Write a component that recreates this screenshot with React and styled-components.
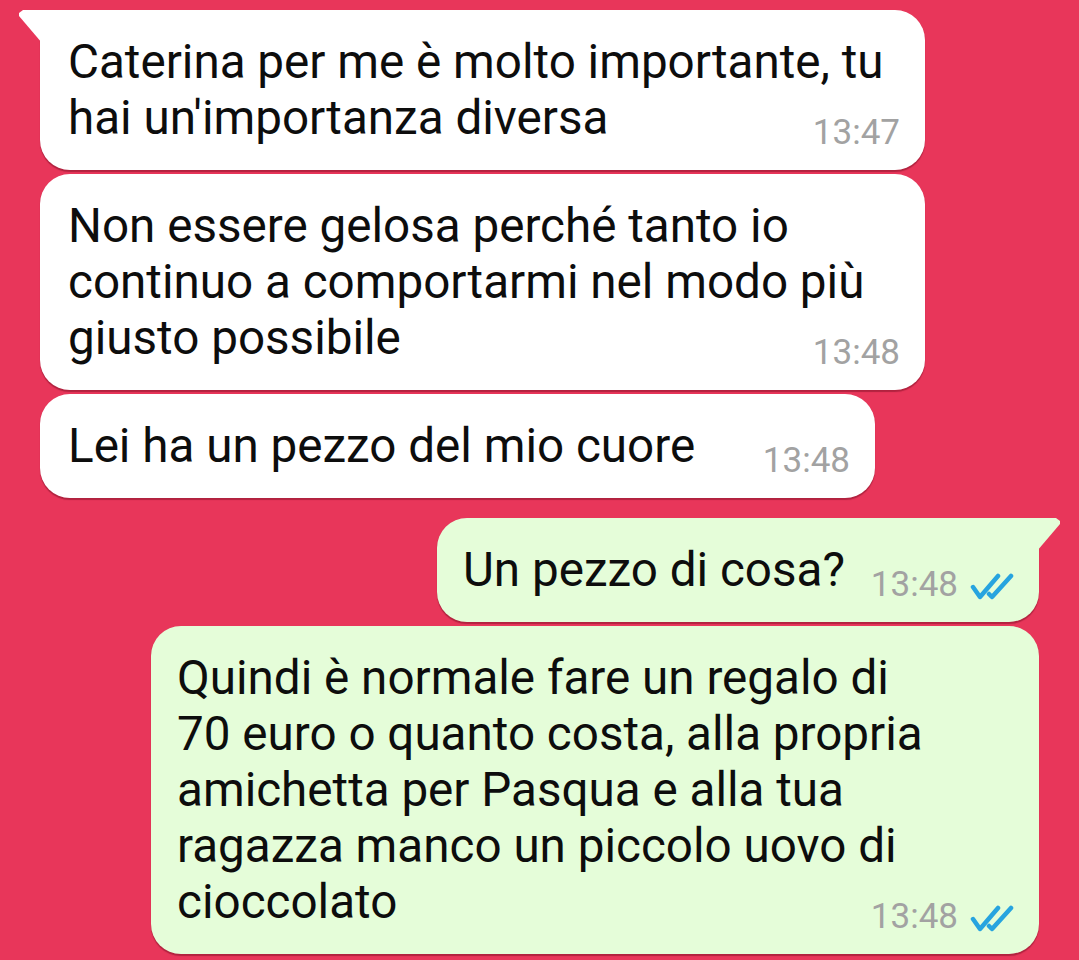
import React from 'react'
import styled, {createGlobalStyle} from 'styled-components'

const GlobalStyle = createGlobalStyle`
  html, body {
    margin: 0;
    padding: 0;
    background: #e8365a;
  }
  body {
    font-family: Roboto, 'Noto Sans', 'Liberation Sans', sans-serif;
  }
`

const Screen = styled.div`
  width: 1079px;
  height: 960px;
  overflow: hidden;
  background: #e8365a;
  display: flex;
  flex-direction: column;
  padding-top: 10px;
  box-sizing: border-box;
`

const Bubble = styled.div`
  position: relative;
  box-sizing: border-box;
  flex-shrink: 0;
  width: ${p => p.$w}px;
  margin-top: ${p => p.$gap ?? 4}px;
  align-self: ${p => (p.$out ? 'flex-end' : 'flex-start')};
  margin-left: ${p => (p.$out ? 0 : 40)}px;
  margin-right: ${p => (p.$out ? 40 : 0)}px;
  padding: 24px 25px 17px ${p => (p.$out ? 26 : 28)}px;
  display: flex;
  flex-direction: column;
  background: ${p => (p.$out ? '#e5fdd9' : '#ffffff')};
  border-radius: 30px;
  ${p => p.$tail && !p.$out && 'border-top-left-radius: 0;'}
  ${p => p.$tail && p.$out && 'border-top-right-radius: 0;'}
  box-shadow: 0 1.5px 1px rgba(110, 10, 30, 0.45);

  &::before {
    content: '';
    display: ${p => (p.$tail ? 'block' : 'none')};
    position: absolute;
    top: 0;
    width: 23px;
    height: 33px;
    background: inherit;
    ${p =>
      p.$out
        ? 'right: -21px; clip-path: polygon(0 0, calc(100% - 4px) 0, 100% 3px, 100% 6px, 0 100%);'
        : 'left: -21px; clip-path: polygon(4px 0, 100% 0, 100% 100%, 0 6px, 0 3px);'}
  }
`

const Text = styled.div`
  font-size: 47.6px;
  line-height: 56px;
  color: #0d0d0d;
  white-space: nowrap;
  margin-bottom: 7px;
`

const Meta = styled.div`
  align-self: flex-end;
  margin-top: -40px;
  display: flex;
  align-items: center;
  gap: 12px;
  height: 40px;
  font-size: 35px;
  line-height: 40px;
  color: #a2a2a2;
`

const Ticks = () => (
  <svg width="44" height="28" viewBox="0 0 44 28" fill="none" style={{marginTop: 4}}>
    <path
      d="M3 14 L10 24 L28 3"
      stroke="#27a4df"
      strokeWidth="4.5"
      strokeLinecap="round"
      strokeLinejoin="round"
    />
    <path
      d="M19 21 L22 24 L41 3"
      stroke="#27a4df"
      strokeWidth="4.5"
      strokeLinecap="round"
      strokeLinejoin="round"
    />
  </svg>
)

const messages = [
  {
    lines: ['Caterina per me è molto importante, tu', "hai un'importanza diversa"],
    time: '13:47',
    w: 885,
    tail: true,
    gap: 0,
  },
  {
    lines: [
      'Non essere gelosa perché tanto io',
      'continuo a comportarmi nel modo più',
      'giusto possibile',
    ],
    time: '13:48',
    w: 885,
  },
  {lines: ['Lei ha un pezzo del mio cuore'], time: '13:48', w: 835},
  {lines: ['Un pezzo di cosa?'], time: '13:48', w: 602, out: true, tail: true, gap: 20},
  {
    lines: [
      'Quindi è normale fare un regalo di',
      '70 euro o quanto costa, alla propria',
      'amichetta per Pasqua e alla tua',
      'ragazza manco un piccolo uovo di',
      'cioccolato',
    ],
    time: '13:48',
    w: 888,
    out: true,
  },
]

export default function App() {
  return (
    <Screen>
      <GlobalStyle />
      {messages.map((m, i) => (
        <Bubble key={i} $w={m.w} $out={m.out} $tail={m.tail} $gap={m.gap}>
          <Text>
            {m.lines.map((l, j) => (
              <div key={j}>{l}</div>
            ))}
          </Text>
          <Meta>
            <span>{m.time}</span>
            {m.out && <Ticks />}
          </Meta>
        </Bubble>
      ))}
    </Screen>
  )
}
